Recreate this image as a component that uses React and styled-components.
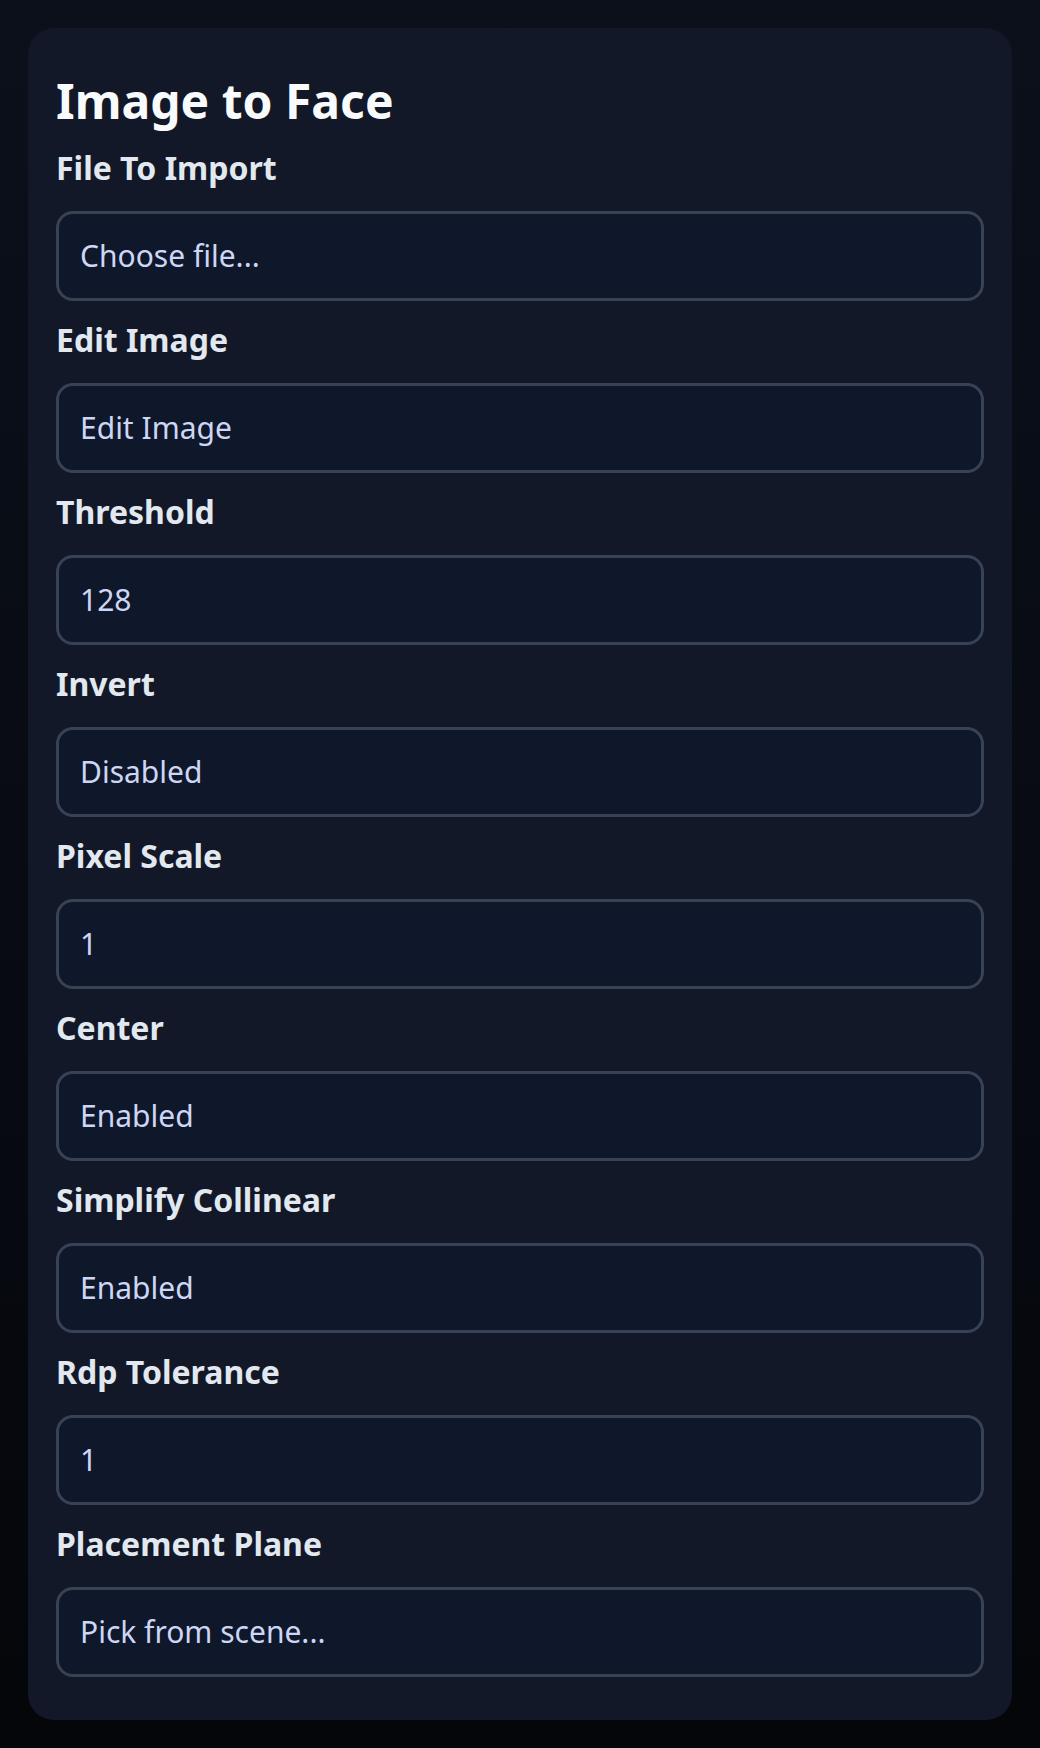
import React from 'react'
import styled, { createGlobalStyle } from 'styled-components'

const GlobalStyle = createGlobalStyle`
  html, body {
    margin: 0;
    padding: 0;
  }
  body {
    background: linear-gradient(180deg, #0b101b 0%, #080b13 50%, #04060a 100%);
    font-family: 'Noto Sans', 'Open Sans', sans-serif;
    min-height: 1748px;
  }
`

const Page = styled.div`
  padding: 28px;
  box-sizing: border-box;
  min-height: 1748px;
`

const Panel = styled.section`
  background: #121827;
  border-radius: 26px;
  padding: 44px 28px 43px;
  display: flex;
  flex-direction: column;
`

const Title = styled.h1`
  margin: 0 0 15px 0;
  font-size: 48px;
  line-height: 1.2;
  font-weight: 700;
  color: #f8fafc;
`

const Form = styled.div`
  display: flex;
  flex-direction: column;
  gap: 16px;
`

const Field = styled.div`
  display: flex;
  flex-direction: column;
  gap: 21px;
`

const Label = styled.label`
  font-size: 32px;
  line-height: 45px;
  font-weight: 700;
  color: #e2e8f0;
`

const Input = styled.div`
  height: 90px;
  box-sizing: border-box;
  display: flex;
  align-items: center;
  padding: 0 21px;
  background: #0f172a;
  border: 3px solid #384255;
  border-radius: 17px;
  font-size: 30px;
  color: #cdd6f4;
`

const fields = [
  { label: 'File To Import', value: 'Choose file...' },
  { label: 'Edit Image', value: 'Edit Image' },
  { label: 'Threshold', value: '128' },
  { label: 'Invert', value: 'Disabled' },
  { label: 'Pixel Scale', value: '1' },
  { label: 'Center', value: 'Enabled' },
  { label: 'Simplify Collinear', value: 'Enabled' },
  { label: 'Rdp Tolerance', value: '1' },
  { label: 'Placement Plane', value: 'Pick from scene...' }
]

const App = () => {
  return (
    <>
      <GlobalStyle />
      <Page>
        <Panel>
          <Title>Image to Face</Title>
          <Form>
            {fields.map((f) => (
              <Field key={f.label}>
                <Label>{f.label}</Label>
                <Input>{f.value}</Input>
              </Field>
            ))}
          </Form>
        </Panel>
      </Page>
    </>
  )
}

export default App
